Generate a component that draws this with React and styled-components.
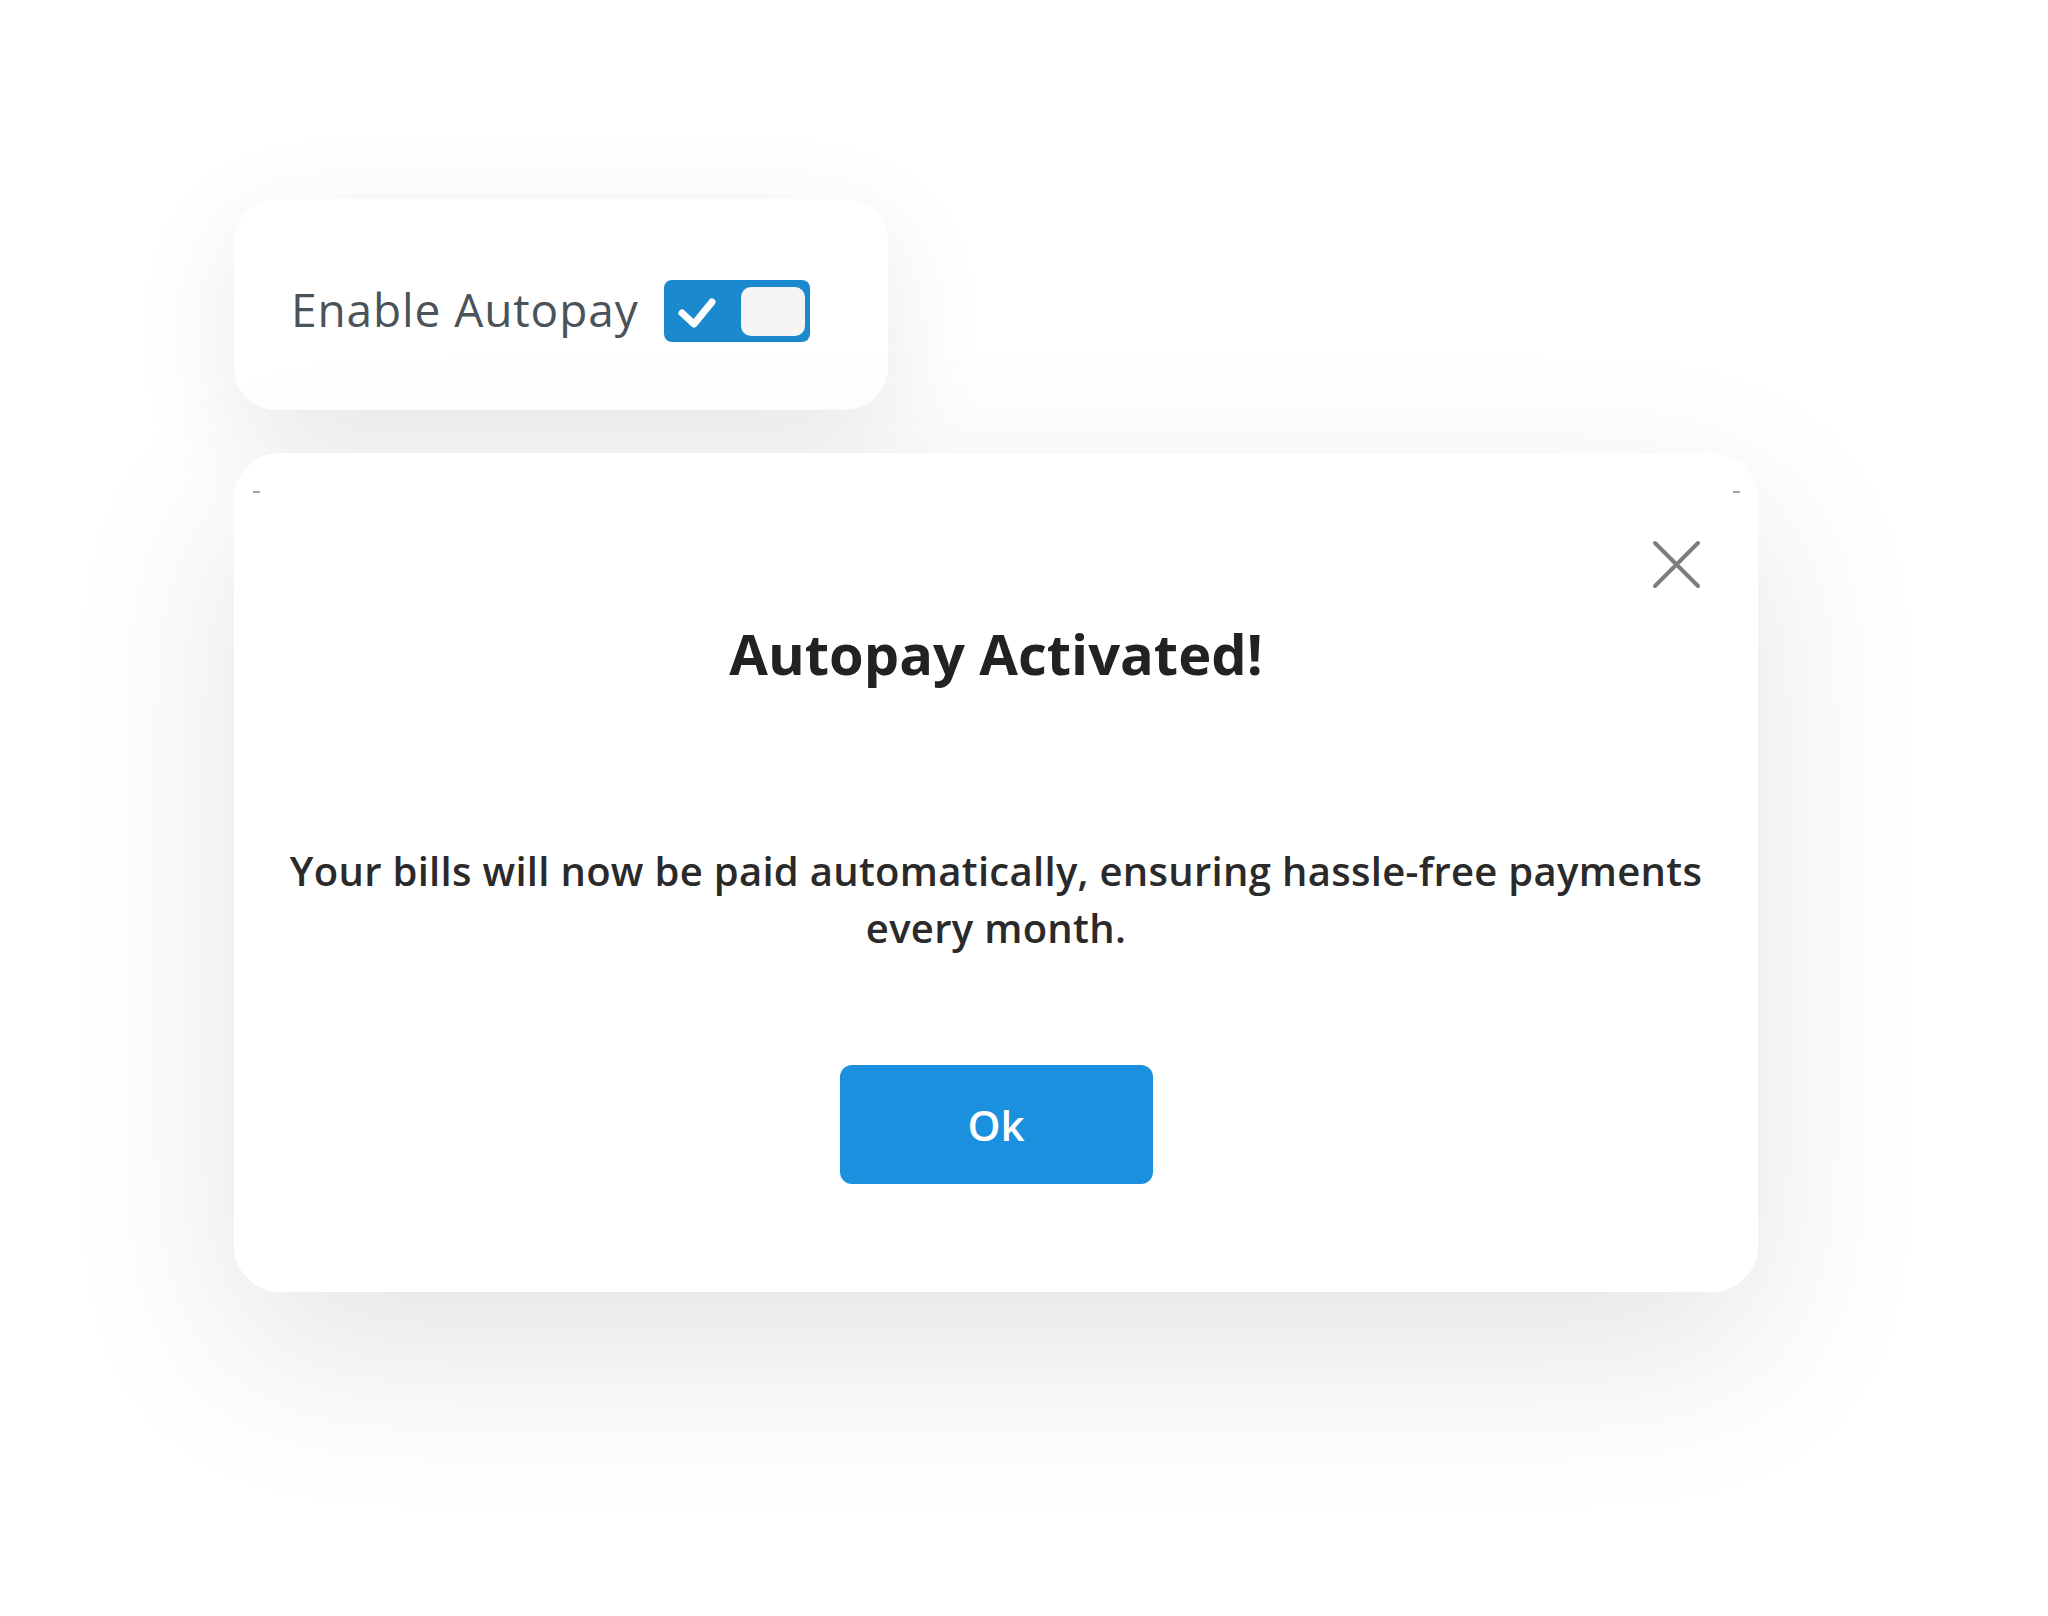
import React from "react";
import styled, { createGlobalStyle } from "styled-components";

const GlobalStyle = createGlobalStyle`
  html, body {
    margin: 0;
    padding: 0;
    background: #ffffff;
  }
  body {
    font-family: "Open Sans", "Noto Sans", "Liberation Sans", sans-serif;
    overflow: hidden;
  }
`;

const Page = styled.div`
  width: 2048px;
  height: 1616px;
  box-sizing: border-box;
  padding: 199px 0 0 234px;
  display: flex;
  flex-direction: column;
  align-items: flex-start;
  gap: 43px;
  background: #ffffff;
`;

const ToggleCard = styled.div`
  width: 654px;
  height: 211px;
  box-sizing: border-box;
  padding: 13px 0 0 57px;
  display: flex;
  align-items: center;
  gap: 25px;
  background: #ffffff;
  border-radius: 42px;
  box-shadow: 0 30px 110px rgba(0, 0, 0, 0.09);
`;

const ToggleLabel = styled.span`
  font-size: 46px;
  font-weight: 400;
  letter-spacing: 0.9px;
  color: #4a5359;
  line-height: 1;
  margin-top: -4px;
`;

const Switch = styled.div`
  width: 146px;
  height: 62px;
  box-sizing: border-box;
  padding: 6px 5px 6px 0;
  display: flex;
  align-items: center;
  justify-content: space-between;
  background: #1b89cd;
  border-radius: 8px;
`;

const CheckMark = styled.svg`
  width: 64px;
  height: 50px;
  flex-shrink: 0;
`;

const Thumb = styled.div`
  width: 64px;
  height: 49px;
  background: #f5f5f5;
  border-radius: 10px;
`;

const Modal = styled.div`
  position: relative;
  width: 1524px;
  height: 839px;
  box-sizing: border-box;
  padding: 166px 30px 0;
  display: flex;
  flex-direction: column;
  align-items: center;
  background: #ffffff;
  border-radius: 46px;
  box-shadow: 0 60px 180px rgba(0, 0, 0, 0.11);
`;

const EdgeMark = styled.span`
  position: absolute;
  top: 38px;
  ${(p) => (p.$side === "left" ? "left: 19px;" : "right: 18px;")}
  width: 7px;
  height: 2px;
  background: #8a8a8a;
  opacity: 0.8;
`;

const CloseButton = styled.button`
  position: absolute;
  top: 86px;
  right: 56px;
  width: 51px;
  height: 51px;
  padding: 0;
  border: none;
  background: transparent;
  display: flex;
  align-items: center;
  justify-content: center;
  cursor: pointer;
`;

const Title = styled.h2`
  margin: 0;
  font-size: 56px;
  font-weight: 700;
  line-height: 68px;
  color: #222222;
  text-align: center;
`;

const Message = styled.p`
  margin: 155px 0 0;
  font-size: 40px;
  font-weight: 600;
  letter-spacing: 0.3px;
  line-height: 57px;
  color: #2a2a2a;
  text-align: center;
`;

const OkButton = styled.button`
  margin-top: 109px;
  width: 313px;
  height: 119px;
  border: none;
  border-radius: 12px;
  background: #1a90df;
  color: #ffffff;
  font-family: inherit;
  font-size: 42px;
  font-weight: 600;
  cursor: pointer;
`;

export default function App() {
  return (
    <>
      <GlobalStyle />
      <Page>
        <ToggleCard>
          <ToggleLabel>Enable Autopay</ToggleLabel>
          <Switch>
            <CheckMark viewBox="0 0 64 50">
              <path
                d="M18 27 L30 38 L48 16"
                fill="none"
                stroke="#ffffff"
                strokeWidth="7"
                strokeLinecap="round"
                strokeLinejoin="round"
              />
            </CheckMark>
            <Thumb />
          </Switch>
        </ToggleCard>
        <Modal>
          <EdgeMark $side="left" />
          <EdgeMark $side="right" />
          <CloseButton aria-label="Close">
            <svg width="51" height="51" viewBox="0 0 51 51">
              <path
                d="M4 4 L47 47 M47 4 L4 47"
                stroke="#7d7d7d"
                strokeWidth="4"
                strokeLinecap="round"
              />
            </svg>
          </CloseButton>
          <Title>Autopay Activated!</Title>
          <Message>
            Your bills will now be paid automatically, ensuring hassle-free payments
            <br />
            every month.
          </Message>
          <OkButton>Ok</OkButton>
        </Modal>
      </Page>
    </>
  );
}
